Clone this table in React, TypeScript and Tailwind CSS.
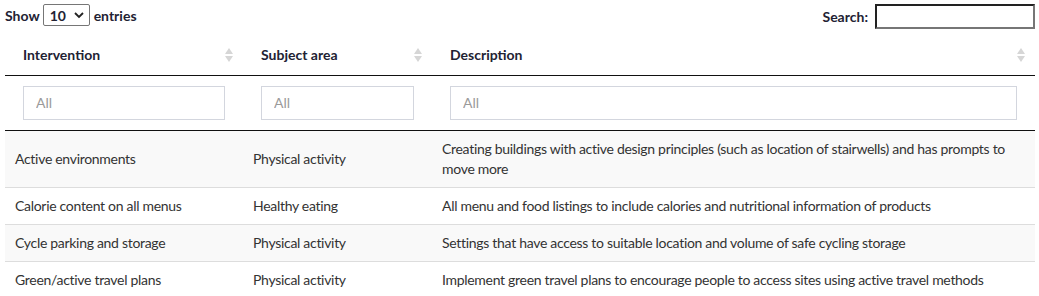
import React from "react";

type Row = { intervention: string; subject: string; description: string };

const rows: Row[] = [
  {
    intervention: "Active environments",
    subject: "Physical activity",
    description:
      "Creating buildings with active design principles (such as location of stairwells) and has prompts to move more",
  },
  {
    intervention: "Calorie content on all menus",
    subject: "Healthy eating",
    description: "All menu and food listings to include calories and nutritional information of products",
  },
  {
    intervention: "Cycle parking and storage",
    subject: "Physical activity",
    description: "Settings that have access to suitable location and volume of safe cycling storage",
  },
  {
    intervention: "Green/active travel plans",
    subject: "Physical activity",
    description: "Implement green travel plans to encourage people to access sites using active travel methods",
  },
];

function SortIcon() {
  return (
    <svg width="8" height="14" viewBox="0 0 8 14" className="shrink-0">
      <path d="M4 0 L8 6 L0 6 Z" fill="#d6d6d6" />
      <path d="M0 8 L8 8 L4 14 Z" fill="#d6d6d6" />
    </svg>
  );
}

function HeaderCell({ label }: { label: string }) {
  return (
    <th className="px-[18px] pr-[10px] h-[40px] text-left font-bold text-[14px] text-[#222233] align-middle">
      <div className="flex items-center justify-between">
        <span>{label}</span>
        <SortIcon />
      </div>
    </th>
  );
}

function FilterCell() {
  return (
    <td className="px-[18px] py-[10px]">
      <input
        placeholder="All"
        className="w-full h-[34px] border border-[#d3d6de] px-[12px] text-[14px] text-[#333] placeholder:text-[#9a9a9a] outline-none bg-white"
      />
    </td>
  );
}

export default function App() {
  return (
    <div className="w-[1039px] h-[296px] overflow-hidden bg-white text-[#333] font-['Lato',sans-serif]">
      <div className="flex items-start justify-between pl-[5px] pr-[4px] pt-[4px] h-[35px]">
        <label className="flex items-center gap-[3px] text-[14px] font-bold text-[#222233]">
          Show
          <span className="relative flex items-center h-[22px] w-[47px] border border-[#767676] rounded-[2px] pl-[6px] text-[14px]">
            10
            <svg width="10" height="7" viewBox="0 0 10 7" className="absolute right-[5px] top-[7px]">
              <path d="M1 1 L5 5 L9 1" stroke="#222" strokeWidth="1.8" fill="none" />
            </svg>
          </span>
          <span className="ml-[1px]">entries</span>
        </label>
        <label className="flex items-center gap-[7px] text-[14px] font-bold text-[#222233]">
          Search:
          <input className="w-[160px] h-[25px] border-2 border-t-[#222] border-l-[#222] border-r-[#767676] border-b-[#767676] outline-none" />
        </label>
      </div>
      <table className="ml-[5px] w-[1030px] table-fixed border-collapse">
        <colgroup>
          <col className="w-[238px]" />
          <col className="w-[189px]" />
          <col />
        </colgroup>
        <thead>
          <tr className="border-b border-[#111]">
            <HeaderCell label="Intervention" />
            <HeaderCell label="Subject area" />
            <HeaderCell label="Description" />
          </tr>
          <tr className="border-b border-[#111]">
            <FilterCell />
            <FilterCell />
            <FilterCell />
          </tr>
        </thead>
        <tbody>
          {rows.map((r, i) => (
            <tr key={r.intervention} className={`border-b border-[#dddddd] ${i % 2 === 0 ? "bg-[#f9f9f9]" : "bg-white"}`}>
              <td className="px-[10px] py-[8px] text-[14px] leading-[20px] tracking-[-0.3px] align-middle">{r.intervention}</td>
              <td className="px-[10px] py-[8px] text-[14px] leading-[20px] tracking-[-0.3px] align-middle">{r.subject}</td>
              <td className="px-[10px] py-[8px] text-[14px] leading-[20px] tracking-[-0.3px] align-middle">{r.description}</td>
            </tr>
          ))}
        </tbody>
      </table>
    </div>
  );
}
